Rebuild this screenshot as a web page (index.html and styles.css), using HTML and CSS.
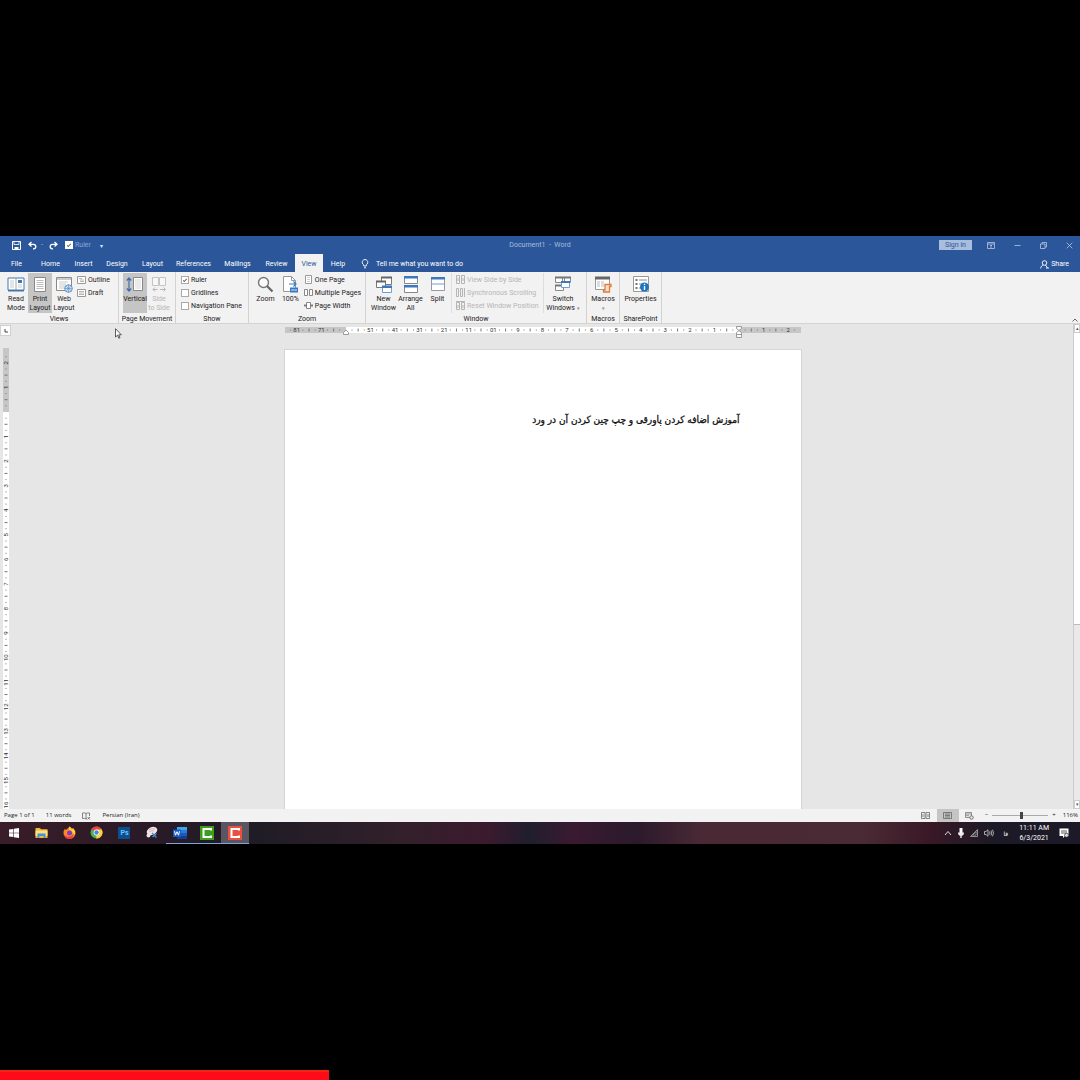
FILE: index.html
```html
<!DOCTYPE html>
<html lang="en">
<head>
  <meta charset="UTF-8">
  <title>Document1 - Word</title>
  <link rel="stylesheet" href="styles.css">
</head>
<body>
<div class="screen">

  <header class="titlebar">
    <div class="quick">
      <button aria-label="Save"><svg width="9" height="9" viewBox="0 0 9 9"><path d="M.5.5h8v8h-8z" fill="none" stroke="#fff"/><path d="M2 .5h5v3H2z" fill="#2b579a" stroke="#fff" stroke-width=".8"/><path d="M2.500 6h4v2.500h-4z" fill="#fff"/></svg></button>
      <button aria-label="Undo"><svg width="9" height="9" viewBox="0 0 9 9"><path d="M3.500 1 1 3.300l2.500 2.300M1 3.300h4.500a2.300 2.300 0 0 1 0 4.600H5" fill="none" stroke="#fff" stroke-width="1.300"/></svg></button>
      <span class="dot">-</span>
      <button aria-label="Redo"><svg width="9" height="9" viewBox="0 0 9 9"><path d="M5.500 1 8 3.300 5.500 5.600M8 3.300H3.500a2.300 2.300 0 0 0 0 4.600H4" fill="none" stroke="#fff" stroke-width="1.300"/></svg></button>
      <label class="check light"><input type="checkbox" checked>Ruler</label>
      <button class="more" aria-label="Customize">▾</button>
    </div>
    <div class="title">Document1&nbsp; -&nbsp; Word</div>
    <div class="winbtns">
      <button class="signin">Sign in</button>
      <button aria-label="Ribbon options"><svg width="8" height="7" viewBox="0 0 8 7"><path d="M.5.5h7v6h-7zM.5 2h7M4 6V3M3 4l1-1 1 1" fill="none" stroke="#b8c8e2" stroke-width=".8"/></svg></button>
      <button aria-label="Minimize"><svg width="7" height="7" viewBox="0 0 7 7"><path d="M.5 3.500h6" stroke="#b8c8e2" stroke-width=".8"/></svg></button>
      <button aria-label="Restore"><svg width="7" height="7" viewBox="0 0 7 7"><path d="M.5 2h4.500v4.500H.5zM2 2V.5h4.500V5H5" fill="none" stroke="#b8c8e2" stroke-width=".8"/></svg></button>
      <button aria-label="Close"><svg width="7" height="7" viewBox="0 0 7 7"><path d="m.7.7 5.600 5.600M6.300.7.7 6.300" stroke="#b8c8e2" stroke-width=".8"/></svg></button>
    </div>
  </header>

  <nav class="tabs">
    <button>File</button>
    <button>Home</button>
    <button>Insert</button>
    <button>Design</button>
    <button>Layout</button>
    <button>References</button>
    <button>Mailings</button>
    <button>Review</button>
    <button class="active">View</button>
    <button>Help</button>
    <button class="tell"><svg width="8" height="10" viewBox="0 0 8 10"><path d="M2.700 7V5.800a2.800 2.800 0 1 1 2.600 0V7zM3 8.800h2" fill="none" stroke="#fff" stroke-width=".9"/></svg>Tell me what you want to do</button>
    <button class="share"><svg width="9" height="9" viewBox="0 0 9 9"><circle cx="4.500" cy="3" r="2.300" fill="none" stroke="#fff" stroke-width=".9"/><path d="M.7 8.500c0-2 1.300-3 2.600-3.500M5.500 5l2 3M6 8h3" fill="none" stroke="#fff" stroke-width=".9"/></svg>Share</button>
  </nav>

  <section class="ribbon">
    <div class="group">
      <div class="tools">
        <button class="big"><svg width="18" height="18" viewBox="0 0 18 18"><path d="M1 3h16v12H1z" fill="#fff" stroke="#4576ad"/><path d="M1 15h16v1.500H1z" fill="#4576ad"/><path d="M9 3v12" stroke="#9aa"/><path d="M3 6h4M3 8h4M3 10h4M3 12h4M11 10h4M11 12h4" stroke="#bbb" stroke-width=".8"/><path d="M11 5h4v3h-4z" fill="#4576ad"/></svg><span>Read<br>Mode</span></button>
        <button class="big on"><svg width="18" height="18" viewBox="0 0 18 18"><path d="M3.500 2.500h11v14h-11z" fill="#fff" stroke="#888"/><path d="M5.500 5.500h7M5.500 7.500h7M5.500 9.500h7M5.500 11.500h7M5.500 13.500h7" stroke="#aaa" stroke-width=".8"/></svg><span>Print<br>Layout</span></button>
        <button class="big"><svg width="18" height="18" viewBox="0 0 18 18"><path d="M1.500 2.500h15v13h-15z" fill="#fff" stroke="#888"/><path d="M1.500 4h15" stroke="#999"/><path d="M4 7h9M4 9h7M4 11h6M4 13h6" stroke="#bbb" stroke-width=".8"/><circle cx="13.500" cy="13.500" r="3.800" fill="#e8f1fa" stroke="#5b8fc7"/><path d="M9.700 13.500h7.600M13.500 9.700v7.600M11.500 11q2 5 4 0M11.500 16q2-5 4 0" fill="none" stroke="#5b8fc7" stroke-width=".7"/></svg><span>Web<br>Layout</span></button>
        <div class="list">
          <button><svg width="9" height="8" viewBox="0 0 9 8"><path d="M.5.5h8v7h-8z" fill="#fff" stroke="#999"/><path d="M2 2.500h3M3 4h4M3 5.500h4" stroke="#999" stroke-width=".7"/></svg>Outline</button>
          <button><svg width="9" height="8" viewBox="0 0 9 8"><path d="M.5.5h8v7h-8z" fill="#fff" stroke="#999"/><path d="M2 2.500h5M2 4h5M2 5.500h5" stroke="#999" stroke-width=".7"/></svg>Draft</button>
        </div>
      </div>
      <div class="name">Views</div>
    </div>

    <div class="group">
      <div class="tools">
        <button class="big on"><svg width="18" height="18" viewBox="0 0 18 18"><path d="M7.500 2.500h9v13h-9z" fill="#fff" stroke="#888"/><path d="M9 5h6M9 7h6M9 9h6M9 11h6M9 13h6" stroke="#ccc" stroke-width=".8"/><path d="M3 3v13M.8 5.500 3 3l2.200 2.500M.8 13.500 3 16l2.200-2.500" fill="none" stroke="#3c6cab" stroke-width="1.200"/></svg><span>Vertical</span></button>
        <button class="big off"><svg width="18" height="18" viewBox="0 0 18 18"><path d="M2.500 2.500h6v8h-6zM9.500 2.500h6v8h-6z" fill="#f7f7f7" stroke="#c4c4c4"/><path d="M3 14.500h4.500M10 14.500h5M5 12.500l-2 2 2 2M13.500 12.500l2 2-2 2" fill="none" stroke="#b5b5b5"/></svg><span>Side<br>to Side</span></button>
      </div>
      <div class="name">Page Movement</div>
    </div>

    <div class="group">
      <div class="tools">
        <div class="list">
          <label class="check"><input type="checkbox" checked>Ruler</label>
          <label class="check"><input type="checkbox">Gridlines</label>
          <label class="check"><input type="checkbox">Navigation Pane</label>
        </div>
      </div>
      <div class="name">Show</div>
    </div>

    <div class="group">
      <div class="tools">
        <button class="big"><svg width="18" height="18" viewBox="0 0 18 18"><circle cx="7.500" cy="7.500" r="5" fill="#fafafa" stroke="#777" stroke-width="1.400"/><path d="m11 11 5.500 5.500" stroke="#666" stroke-width="2.200"/></svg><span>Zoom</span></button>
        <button class="big"><svg width="18" height="18" viewBox="0 0 18 18"><path d="M2.500 1.500h8l4 4v11h-12z" fill="#fff" stroke="#999"/><path d="M10.500 1.500v4h4" fill="none" stroke="#999"/><path d="M8 9h7M12.500 6.500 15 9l-2.500 2.500" fill="none" stroke="#3c78c0" stroke-width="1.200"/><path d="M9 12.500h8v5H9z" fill="#3c78c0"/><path d="M11 14v2M13 14v2M15 14v2" stroke="#fff" stroke-width=".8"/></svg><span>100%</span></button>
        <div class="list">
          <button><svg width="9" height="9" viewBox="0 0 9 9"><path d="M1.500.5h6v8h-6z" fill="#fff" stroke="#999"/><path d="M3 2.500h3M3 4.500h3M3 6.500h3" stroke="#bbb" stroke-width=".7"/></svg>One Page</button>
          <button><svg width="9" height="9" viewBox="0 0 9 9"><path d="M.5 1.500h3v6h-3zM5.500 1.500h3v6h-3z" fill="#fff" stroke="#888"/></svg>Multiple Pages</button>
          <button><svg width="9" height="9" viewBox="0 0 9 9"><path d="M2.500 1.500h4v6h-4z" fill="#fff" stroke="#888"/><path d="M0 4.500h3M6 4.500h3M1.500 3 0 4.500 1.500 6M7.500 3 9 4.500 7.500 6" fill="none" stroke="#666" stroke-width=".8"/></svg>Page Width</button>
        </div>
      </div>
      <div class="name">Zoom</div>
    </div>

    <div class="group window">
      <div class="tools">
        <button class="big"><svg width="18" height="18" viewBox="0 0 18 18"><path d="M6.500 2.500h10v7h-10z" fill="#fff" stroke="#777"/><path d="M6 1.500h11v2H6z" fill="#666"/><path d="M1.500 6.500h9v6h-9z" fill="#fff" stroke="#777"/><path d="M1 5.500h10v2H1z" fill="#666"/><path d="M7.500 11.500h9v6h-9z" fill="#fff" stroke="#6c9fd6"/><path d="M7 10.500h10v2.500H7z" fill="#3c78c0"/></svg><span>New<br>Window</span></button>
        <button class="big"><svg width="18" height="18" viewBox="0 0 18 18"><path d="M2.500 1.500h13v7h-13zM2.500 10.500h13v7h-13z" fill="#fff" stroke="#888"/><path d="M2 1h14v2.500H2zM2 10h14v2.500H2z" fill="#3c78c0"/></svg><span>Arrange<br>All</span></button>
        <button class="big"><svg width="18" height="18" viewBox="0 0 18 18"><path d="M2.500 2.500h13v13h-13z" fill="#fff" stroke="#999"/><path d="M2 2h14v2.500H2z" fill="#3c78c0"/><path d="M2 9h14" stroke="#6c9fd6"/></svg><span>Split</span></button>
        <div class="list off lined">
          <button disabled><svg width="9" height="9" viewBox="0 0 9 9"><path d="M.5.5h3v8h-3zM5.500.5h3v8h-3zM2 3v3M7 3v3" fill="none" stroke="#b5b5b5"/></svg>View Side by Side</button>
          <button disabled><svg width="9" height="9" viewBox="0 0 9 9"><path d="M.5.5h2v8h-2zM4.500.5h2v8h-2zM8.500 0v9" fill="none" stroke="#b5b5b5"/></svg>Synchronous Scrolling</button>
          <button disabled><svg width="9" height="9" viewBox="0 0 9 9"><path d="M.5 1.500h3v7h-3zM5.500 1.500h3v7h-3zM0 .5h9M2 4v3M7 4v3" fill="none" stroke="#b5b5b5"/></svg>Reset Window Position</button>
        </div>
        <button class="big wide"><svg width="18" height="18" viewBox="0 0 18 18"><path d="M1.500 2.500h9v5h-9zM8.500 2.500h8v5h-8z" fill="#fff" stroke="#888"/><path d="M1 1.500h16v2H1z" fill="#777"/><path d="M1.500 10.500h8v5h-8z" fill="#fff" stroke="#888"/><path d="M1 9.500h9v2H1z" fill="#777"/><path d="M7.500 6.500h8v6h-8z" fill="#fff" stroke="#6c9fd6"/><path d="M7 6h9v2H7z" fill="#3c78c0"/></svg><span>Switch<br>Windows <i>▾</i></span></button>
      </div>
      <div class="name">Window</div>
    </div>

    <div class="group single">
      <div class="tools">
        <button class="big"><svg width="18" height="18" viewBox="0 0 18 18"><path d="M1.500 2.500h14v12h-14z" fill="#fff" stroke="#999"/><path d="M1 1.500h15v3H1z" fill="#666"/><path d="M3 7h3M7 7h3M3 9h3M7 9h3M3 11h3M7 11h3" stroke="#bbb"/><path d="M11 9.500h6v2h-1.500v5.500H9.500v-2H11z" fill="#fbe3d3" stroke="#e07b39" stroke-width="1.300"/></svg><span>Macros<br><i>▾</i></span></button>
      </div>
      <div class="name">Macros</div>
    </div>

    <div class="group single">
      <div class="tools">
        <button class="big"><svg width="18" height="18" viewBox="0 0 18 18"><path d="M1.500 1.500h15v15h-15z" fill="#fff" stroke="#999"/><path d="M3.500 5h2M3.500 9h2M3.500 13h2" stroke="#444" stroke-width="1.600"/><path d="M7 5h8M7 9h3M7 13h2" stroke="#888"/><circle cx="12.500" cy="12" r="4.500" fill="#1b73c4"/><path d="M12.500 11v4M12.500 8.700v1.300" stroke="#fff" stroke-width="1.400"/></svg><span>Properties</span></button>
      </div>
      <div class="name">SharePoint</div>
    </div>
    <button class="collapse" aria-label="Collapse the ribbon"><svg width="6" height="4" viewBox="0 0 6 4"><path d="M.5 3.500 3 1l2.500 2.500" fill="none" stroke="#666"/></svg></button>
  </section>

  <main class="workspace">
    <div class="side">
      <button class="tabstop" aria-label="Tab stop"><svg width="4" height="4" viewBox="0 0 4 4"><path d="M1 0v3h3" fill="none" stroke="#444"/></svg></button>
      <svg class="vruler" id="vruler" width="6"></svg>
    </div>
    <div class="canvas">
      <svg class="hruler" id="hruler" width="516" height="12"></svg>
      <article class="page" dir="rtl" lang="fa">
        <p>آموزش اضافه کردن پاورقی و چپ چین کردن آن در ورد</p>
      </article>
    </div>
    <div class="scroll">
      <button aria-label="Scroll up">▴</button>
      <div class="thumb"></div>
      <button aria-label="Scroll down">▾</button>
    </div>
    <svg class="pointer" width="7" height="11" viewBox="0 0 7 11"><path d="M.5.7v8.300l2-1.800 1.300 3 1.200-.5-1.300-2.900h2.600z" fill="#fff" stroke="#333" stroke-width=".8"/></svg>
  </main>

  <footer class="status">
    <span>Page 1 of 1</span>
    <span>11 words</span>
    <svg width="9" height="8" viewBox="0 0 9 8"><path d="M4 1.500Q2.500.5.500 1v5.500q2-.5 3.500.5zM4 1.500Q5.500.5 7.500 1v3M4 7l1-.5M5.500 5l2.500 2.500M8 5 5.500 7.500" fill="none" stroke="#666" stroke-width=".8"/></svg>
    <span>Persian (Iran)</span>
    <div class="views">
      <button aria-label="Read Mode"><svg width="9" height="7" viewBox="0 0 9 7"><path d="M.5.500h3.500v6H.5zM5 .5h3.500v6H5zM2 2v3M7 2v3" fill="none" stroke="#777" stroke-width=".9"/></svg></button>
      <button class="on" aria-label="Print Layout"><svg width="9" height="7" viewBox="0 0 9 7"><path d="M.5.5h8v6h-8zM2 2h5M2 3.500h5M2 5h5" fill="none" stroke="#666" stroke-width=".8"/></svg></button>
      <button aria-label="Web Layout"><svg width="9" height="8" viewBox="0 0 9 8"><path d="M.5.5h6v5h-6zM1 2h5M1 3.700h3" fill="none" stroke="#777" stroke-width=".8"/><circle cx="6.500" cy="5.500" r="1.800" fill="#ddd" stroke="#666" stroke-width=".8"/></svg></button>
    </div>
    <div class="zoom">
      <button aria-label="Zoom out">−</button>
      <input type="range" min="10" max="190" value="104" aria-label="Zoom">
      <button aria-label="Zoom in">+</button>
    </div>
    <span class="pct">116%</span>
  </footer>

  <div class="taskbar">
    <div class="apps">
      <button aria-label="Start"><svg width="10" height="10" viewBox="0 0 10 10"><path d="m0 1.500 4.300-.6v3.800H0zM4.900.8 10 0v4.700H4.900zM0 5.300h4.300v3.800L0 8.500zM4.900 5.300H10V10l-5.100-.8z" fill="#fff"/></svg></button>
      <button aria-label="File Explorer"><svg width="13" height="12" viewBox="0 0 13 12"><path d="M.5 1h4.500l1 1.200h6.500V11H.5z" fill="#f2b632"/><path d="M.5 3.500h12V9H.5z" fill="#ffdf80"/><path d="M2.500 6.500h8V11H8.700V9H4.300v2H2.500z" fill="#3d95dc"/></svg></button>
      <button aria-label="Firefox"><svg width="13" height="13" viewBox="0 0 13 13"><path d="M6.500.5q2 1 2.500 2.500l1-1q2.500 2.500 2.500 5a6 6 0 0 1-12 0Q.5 4.500 2 2.500l.5 1.500Q4.500 3 6.500.5z" fill="#ff8a1e"/><path d="M6.500.5Q9 2 9 4l1-2q2.500 2.500 2 6-1 1-2-.5Q9 4 6 4z" fill="#ffd23c"/><circle cx="6.500" cy="7" r="2.500" fill="#7b3fd0"/><path d="M.8 8q2 3.500 6 2.500 3-.5 4-3-.5 5.500-5 5.500-4 0-5-5z" fill="#f4364c"/></svg></button>
      <button aria-label="Chrome"><svg width="13" height="13" viewBox="0 0 13 13"><circle cx="6.500" cy="6.500" r="6" fill="#4caf50"/><path d="M6.500 6.500 1.300 3.500a6 6 0 0 1 10.400 0z" fill="#e8453c"/><path d="M6.500 6.500V3.500h5.200a6 6 0 0 1-5.500 9z" fill="#fdd03b"/><circle cx="6.500" cy="6.500" r="2.900" fill="#fff"/><circle cx="6.500" cy="6.500" r="2.200" fill="#4285f4"/></svg></button>
      <button aria-label="Photoshop"><span class="ps">Ps</span></button>
      <button aria-label="Snipping Tool"><svg width="14" height="13" viewBox="0 0 14 13"><ellipse cx="7" cy="5" rx="5.500" ry="3.800" transform="rotate(-25 7 5)" fill="#eee6ea"/><path d="M4 4q3-2 6-1M4 6q3-2 5-1" fill="none" stroke="#d9a0ad" stroke-width=".8"/><circle cx="3.500" cy="9.500" r="2" fill="#e9e2e5"/><path d="m7 7 4.500 4.500M11.500 7.500l-4 3.500" stroke="#4a8ac4" stroke-width="1.400"/></svg></button>
      <button class="open" aria-label="Word"><svg width="14" height="12" viewBox="0 0 14 12"><path d="M4 0h10v3H4z" fill="#41a5ee"/><path d="M4 3h10v3H4z" fill="#2b7cd3"/><path d="M4 6h10v3H4z" fill="#185abd"/><path d="M4 9h10v3H4z" fill="#103f91"/><path d="M0 2.500h8v7.500H0z" fill="#185abd"/><path d="m1.500 4.200 1 4L4 4.700l1.500 3.500 1-4" fill="none" stroke="#fff"/></svg></button>
      <button class="open" aria-label="Camtasia"><svg width="14" height="14" viewBox="0 0 14 14"><path d="M0 0h14v14H0z" fill="#3f9d1c"/><path d="M11 4.500V3H3.500v8H11V9.500" fill="none" stroke="#fff" stroke-width="2"/></svg></button>
      <button class="open current" aria-label="Recorder"><svg width="14" height="14" viewBox="0 0 14 14"><path d="M0 0h14v14H0z" fill="#e8503f"/><path d="M11 4.500V3H3.500v8H11V9.500" fill="none" stroke="#fff" stroke-width="2"/></svg></button>
    </div>
    <div class="tray">
      <svg width="8" height="6" viewBox="0 0 8 6"><path d="M1 5l3-3.500L7 5" fill="none" stroke="#ddd"/></svg>
      <svg width="6" height="10" viewBox="0 0 6 10"><path d="M1.500 0h3v5h-3z" fill="#fff"/><path d="M0 4.500h6q0 3-2.300 3.200V10H2.300V7.700Q0 7.500 0 4.500z" fill="#eee"/></svg>
      <svg width="8" height="8" viewBox="0 0 8 8"><path d="M.5 7.500 7.500.5v7zM2.500 7.500q0-3 5-5M4.500 7.500q0-2 3-3" fill="none" stroke="#aaa" stroke-width=".8"/></svg>
      <svg width="10" height="8" viewBox="0 0 10 8"><path d="M.5 2.500H2L4 .7v6.600L2 5.500H.5zM5.500 2.500q1 1.500 0 3M7 1.500q1.500 2.500 0 5M8.500.7q2 3.300 0 6.600" fill="none" stroke="#ccc" stroke-width=".8"/></svg>
      <span class="lang" lang="fa">فا</span>
      <time>11:11 AM<br>6/3/2021</time>
      <svg width="10" height="10" viewBox="0 0 10 10"><path d="M.5.5h9V8H6L4 10V8H.5z" fill="#fff"/><path d="M2 3h6M2 5h6" stroke="#333" stroke-width=".8"/><circle cx="7.500" cy="7.300" r="2" fill="#ddd" stroke="#222" stroke-width=".6"/></svg>
    </div>
  </div>
</div>
<div class="progress"><div class="played"></div></div>

<script src="rulers.js"></script>
</body>
</html>
```
FILE: styles.css
```css
body { margin: 0; background: #000; min-height: 100vh; display: flex; flex-direction: column; justify-content: center; font: 7px/9px Roboto, "Open Sans", sans-serif; color: #222; }
button { border: 0; padding: 0; background: none; font: inherit; color: inherit; }
input { margin: 0; }
svg { display: block; flex: none; }
i { font-style: normal; font-size: 5px; color: #888; }

.screen { display: flex; flex-direction: column; min-height: 608px; }

/* title bar */
.titlebar { display: grid; grid-template-columns: 1fr auto 1fr; align-items: center; height: 18px; background: #2b579a; color: #a9bcdc; }
.quick { display: flex; align-items: center; padding-left: 12px; gap: 7px; }
.quick .dot { width: 1px; margin-left: -3px; }
.quick .light { color: #8ba6d3; }
.quick .more { color: #dde6f4; font-size: 6px; margin-left: 2px; }
.winbtns { display: flex; justify-content: flex-end; align-items: center; gap: 19px; padding-right: 7px; }
.winbtns .signin { background: #a9bddd; color: #2b579a; width: 33px; height: 10px; line-height: 10px; margin-right: -4px; }

/* tabs */
.tabs { display: grid; grid-template-columns: 33px 35px 31px 36px 35px 47px 41px 37px 28px 30px 1fr auto; height: 18px; background: #2b579a; color: #fff; }
.tabs button { padding-top: 2px; }
.tabs .active { background: #f3f2f2; color: #2b579a; }
.tabs .tell, .tabs .share { display: flex; align-items: center; gap: 7px; }
.tabs .tell { padding-left: 8px; }
.tabs .share { gap: 2px; padding-right: 11px; }

/* ribbon */
.ribbon { display: grid; grid-template-columns: 119px 57px 73px 117px 221px 33px 42px 1fr; height: 51px; background: #f3f2f2; border-bottom: 1px solid #d4d4d4; }
.group { display: flex; flex-direction: column; justify-content: space-between; border-right: 1px solid #d2d2d2; }
.tools { display: flex; padding: 1px 4px 0; }
.big { width: 24px; height: 40px; display: flex; flex-direction: column; justify-content: flex-start; align-items: center; gap: 2px; padding-top: 2px; white-space: nowrap; text-align: center; }
.group:nth-child(n+4) .big { width: 26px; }
.group.window .big { width: 27px; }
.group.window .wide { width: 38px; }
.group.single .big { width: 100%; }
.on { background: #c5c5c5; }
.off { color: #b5b5b5; }
.list { display: flex; flex-direction: column; padding-left: 1px; }
.list button, .list label { display: flex; align-items: center; gap: 2px; height: 13px; line-height: 12px; white-space: nowrap; }
.list.lined { flex: 1; border: solid #ddd; border-width: 0 1px; padding-left: 4px; }
.name { text-align: center; height: 8px; }
.check { display: flex; align-items: center; gap: 2px; }
.check input { appearance: none; width: 8px; height: 8px; background: #fff; border: 1px solid #aaa; display: grid; place-items: center; }
.check input:checked::before { content: ""; width: 3px; height: 1px; border: solid #666; border-width: 0 0 1px 1px; transform: rotate(-45deg); }
.check.light input { border-color: #fff; }
.collapse { justify-self: end; align-self: end; padding: 0 2px 1px; }

/* workspace */
.workspace { position: relative; flex: 1; height: 485px; display: grid; grid-template-columns: 12px 1fr 7px; background: #e6e6e6; overflow: hidden; }
.side { display: flex; flex-direction: column; gap: 12px; padding-top: 1px; }
.tabstop { width: 11px; height: 11px; background: #fdfdfd; border: 1px solid #d0d0d0; display: grid; place-items: center; }
.vruler { margin-left: 3px; height: 461px; }
.canvas { display: flex; flex-direction: column; align-items: center; padding-top: 2px; gap: 11px; }
.hruler, .vruler { font-size: 6px; }
.paper { fill: #fff; }
.margin { fill: #c6c6c6; }
.tick { stroke: #777; stroke-width: 1; }
.mark { fill: #fff; stroke: #999; }
.num { fill: #333; text-anchor: middle; }
.page { box-sizing: border-box; width: 518px; flex: 1; background: #fff; border: 1px solid #d5d5d5; border-bottom: 0; padding: 60px 61px 0; }
.page p { margin: 0; font: 10px/20px "DejaVu Sans Condensed", "DejaVu Sans", sans-serif; color: #111; -webkit-text-stroke: .3px #111; white-space: nowrap; }
.scroll { display: flex; flex-direction: column; background: #e9e9e9; border-left: 1px solid #ccc; }
.scroll button { height: 9px; background: #fff; border: 1px solid #ccc; font-size: 5px; line-height: 7px; color: #555; }
.scroll .thumb { height: 291px; background: #fff; border-bottom: 1px solid #bbb; margin-bottom: auto; }
.pointer { position: absolute; left: 115px; top: 4px; }

/* status bar */
.status { display: flex; align-items: center; height: 13px; background: #f3f2f2; padding: 0 2px 0 4px; gap: 11px; font-family: "Open Sans", sans-serif; font-size: 6px; white-space: nowrap; }
.views { display: flex; margin-left: auto; height: 100%; }
.views button { width: 22px; display: grid; place-items: center; }
.zoom { display: flex; align-items: center; gap: 4px; margin-left: -7px; }
.zoom input { appearance: none; width: 56px; height: 9px; background: linear-gradient(#aaa, #aaa) center / 100% 1px no-repeat; }
.zoom input::-webkit-slider-thumb { appearance: none; width: 3px; height: 7px; background: #444; }
.pct { margin-left: -4px; }

/* taskbar */
.taskbar { display: flex; justify-content: space-between; height: 22px; color: #fff; background: linear-gradient(90deg, #3a1d28, #2b1a27 12%, #1f1c26 24%, #32202a 37%, #3c1a2e 45%, #201e2e 49%, #3a1a30 53%, #2b1a2c 59%, #4a2935 65%, #4a2a35 80%, #3a1826 86%, #1c1a26 92%); }
.apps { display: grid; grid-template-columns: repeat(9, 1fr); width: 249px; }
.apps button { display: grid; place-items: center; border-bottom: 1px solid transparent; }
.apps .open { border-bottom-color: #7aa7d8; }
.apps .current { background: #5a5560; }
.ps { width: 12px; height: 12px; line-height: 12px; background: #0b4f8f; color: #6cc1ff; font-weight: bold; }
.tray { display: flex; align-items: center; gap: 6px; padding-right: 11px; }
.tray time { text-align: center; line-height: 10px; margin: 0 4px 0 5px; }
.tray .lang { font-family: "DejaVu Sans", sans-serif; font-size: 6px; margin-left: 3px; }

/* player progress */
.progress { position: absolute; left: 0; right: 0; bottom: 0; height: 10px; }
.played { width: 30.46%; height: 100%; background: #ff0a18; box-sizing: border-box; border-top: 2px solid #f22613; }
```
FILE: rulers.js
```js
const NS = "http://www.w3.org/2000/svg";
const CM = 24.57;

function add(parent, tag, attrs, text) {
  const el = document.createElementNS(NS, tag);
  for (const k in attrs) el.setAttribute(k, attrs[k]);
  if (text) el.textContent = text;
  parent.appendChild(el);
}

// horizontal ruler counts from the right margin
const h = document.getElementById("hruler");
const zero = 454;
add(h, "rect", { class: "margin", x: 0, y: 1, width: 516, height: 6 });
add(h, "rect", { class: "paper", x: 61, y: 1, width: 393, height: 6 });
for (let q = -9; q <= 73; q++) {
  const x = zero - q * CM / 4;
  const n = Math.abs(q / 4);
  if (q % 4 === 0) {
    if (q !== 0 && q !== 64) add(h, "text", { class: "num", x: x, y: 6 }, String(n).split("").reverse().join(""));
  } else {
    const len = q % 2 === 0 ? 3 : 1;
    add(h, "path", { class: "tick", d: `M${x} ${4 - len / 2}v${len}` });
  }
}
add(h, "path", { class: "mark", d: "M58.500 8.500v-2l2.500-2.500 2.500 2.500v2z" });
add(h, "path", { class: "mark", d: "M451.500.5h5v2l-2.500 2-2.500-2zM451.500 11.500v-5l2.500-2 2.500 2v5zM451.500 8.500h5" });

// vertical ruler counts from the top margin
const v = document.getElementById("vruler");
add(v, "rect", { class: "margin", x: 0, y: 0, width: 6, height: 64 });
add(v, "rect", { class: "paper", x: 0, y: 64, width: 6, height: 400 });
for (let q = -9; q <= 65; q++) {
  const y = 64 + q * CM / 4;
  if (q % 4 === 0) {
    if (q !== 0) add(v, "text", { class: "num", x: 0, y: 0, transform: `translate(5 ${y}) rotate(-90)` }, String(Math.abs(q / 4)));
  } else {
    const len = q % 2 === 0 ? 3 : 1;
    add(v, "path", { class: "tick", d: `M${3 - len / 2} ${y}h${len}` });
  }
}
```
